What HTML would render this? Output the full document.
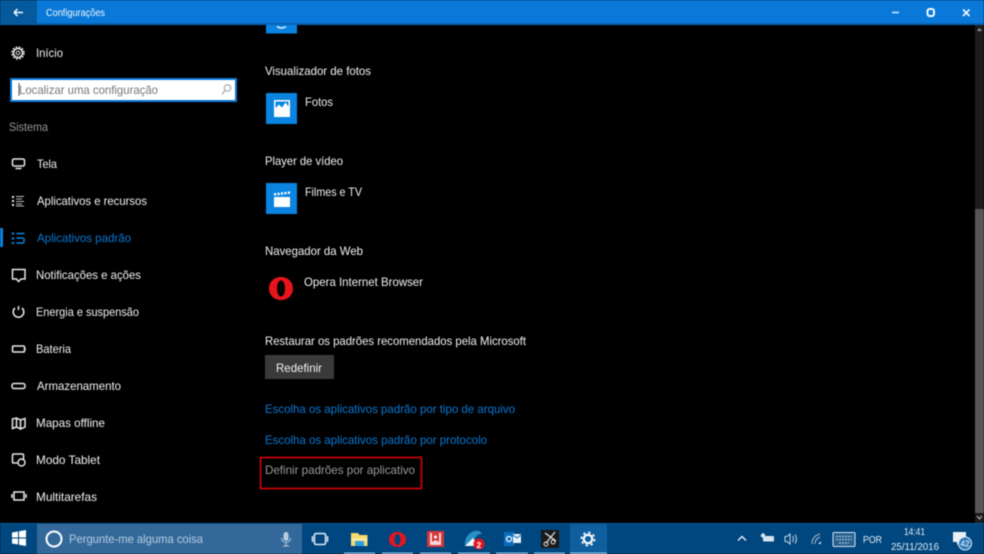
<!DOCTYPE html>
<html lang="pt"><head><meta charset="utf-8"><title>Configurações</title>
<style>
html,body{margin:0;padding:0;background:#000;width:984px;height:554px;overflow:hidden}
svg{display:block;filter:blur(.45px)}
text{font-family:"Liberation Sans",sans-serif;font-size:12px;fill:#f2f2f2}
.b{fill:#0a78d4}
.i{fill:none;stroke:#e8e8e8;stroke-width:1.5}
.u{fill:#8fc0e8}
</style></head><body>
<svg width="984" height="554" viewBox="0 0 984 554" xmlns="http://www.w3.org/2000/svg">
<rect width="984" height="554" fill="#000"/>
<!-- title bar -->
<rect width="984" height="23" fill="#0a78d8"/>
<rect y="23" width="984" height="2" fill="#0563b4"/>
<rect width="37" height="24" fill="#055a9e"/>
<path d="M14 12.500h9M14 12.500l3.500-3.500M14 12.500l3.500 3.500" fill="none" stroke="#f2f8fd" stroke-width="1.500"/>
<text x="46" y="16" textLength="59" lengthAdjust="spacingAndGlyphs" style="font-size:10px;fill:#f2f8fd">Configurações</text>
<path d="M892 12.500h7" stroke="#cfe4f6" stroke-width="1.600"/>
<rect x="927.500" y="9" width="6.500" height="7" rx="2" fill="none" stroke="#f2f8fd" stroke-width="2"/>
<path d="M963 9.500l6.500 6.500M969.500 9.500l-6.500 6.500" stroke="#f2f8fd" stroke-width="1.600"/>
<!-- sidebar -->
<circle cx="18" cy="53" r="4.500" class="i"/><circle cx="18" cy="53" r="1.800" fill="none" stroke="#e8e8e8" stroke-width="1"/><circle cx="18" cy="53" r="6" fill="none" stroke="#e8e8e8" stroke-width="1.400" stroke-dasharray="1.800 1.400"/>
<text x="36" y="57" textLength="27" lengthAdjust="spacingAndGlyphs">Início</text>
<rect x="11" y="79" width="225" height="22" fill="#fff" stroke="#0a78d8" stroke-width="2"/>
<path d="M19 83v13" stroke="#555" stroke-width="1"/>
<text x="19" y="94" textLength="139" lengthAdjust="spacingAndGlyphs" style="fill:#777">Localizar uma configuração</text>
<circle cx="227.500" cy="88" r="3.300" fill="none" stroke="#999" stroke-width="1"/><path d="M225 90.500l-3 3.500" stroke="#999" stroke-width="1"/>
<text x="9" y="131" textLength="39" lengthAdjust="spacingAndGlyphs" style="fill:#999">Sistema</text>

<rect x="12.500" y="159" width="12" height="7" rx="1.500" class="i"/><path d="M15.500 168.500h6" class="i"/>
<text x="37" y="168" textLength="20" lengthAdjust="spacingAndGlyphs">Tela</text>
<path d="M13 196v2M13 200v2M13 204v2" stroke="#f0f0f0" stroke-width="2"/><path d="M16 196.500h8M16 199h6M16 201.500h8M16 204h6M16 206h8" stroke="#bbb" stroke-width="1"/>
<text x="37" y="205" textLength="110" lengthAdjust="spacingAndGlyphs">Aplicativos e recursos</text>
<rect x="0" y="228" width="3" height="19" fill="#0a84e0"/>
<path d="M13 232.500v2M13 237.500v2M13 242v2" stroke="#0a84e0" stroke-width="2.400"/><path d="M16.500 233.500h8M16.500 238h7M16.500 243h7M24 238v5" stroke="#0a84e0" stroke-width="1.400" fill="none"/>
<text x="37" y="242" textLength="94" lengthAdjust="spacingAndGlyphs" class="b">Aplicativos padrão</text>
<path d="M12.500 269.500h12.500v9.500h-4l-2.500 2.500-2-2.500h-4z" class="i"/>
<text x="36" y="279" textLength="105" lengthAdjust="spacingAndGlyphs">Notificações e ações</text>
<path d="M15 308a5.300 5.300 0 1 0 7 0" class="i"/><path d="M18.500 306v4" class="i"/>
<text x="36" y="316" textLength="103" lengthAdjust="spacingAndGlyphs">Energia e suspensão</text>
<rect x="12.500" y="346" width="12" height="6" rx="1" class="i"/><path d="M25 348v2" class="i"/>
<text x="36" y="353" textLength="35" lengthAdjust="spacingAndGlyphs">Bateria</text>
<rect x="12" y="383.500" width="13" height="5" rx="2" class="i"/>
<text x="37" y="390" textLength="84" lengthAdjust="spacingAndGlyphs">Armazenamento</text>
<path d="M12.500 419v9.500l4-1.500 4 2 4.500-2v-8.500l-4.500 1.500-4-2zM16.500 417.500v9M20.500 419.500v9" class="i"/>
<text x="36" y="427" textLength="69" lengthAdjust="spacingAndGlyphs">Mapas offline</text>
<rect x="12.500" y="454" width="11" height="9" rx="1" class="i"/><circle cx="21.500" cy="462.500" r="3.500" fill="#000" stroke="#e8e8e8" stroke-width="1.400"/>
<text x="36" y="464" textLength="64" lengthAdjust="spacingAndGlyphs">Modo Tablet</text>
<rect x="14" y="492" width="10" height="8" class="i"/><path d="M12 494v4M26 494v4" class="i"/>
<text x="36" y="501" textLength="61" lengthAdjust="spacingAndGlyphs">Multitarefas</text>

<!-- content -->
<rect x="266" y="25" width="31" height="8.500" fill="#0a84e0"/>
<path d="M277 26.500q4.500 3 9 0" fill="none" stroke="#e4f2fc" stroke-width="1.400"/>
<text x="265" y="75" textLength="106" lengthAdjust="spacingAndGlyphs">Visualizador de fotos</text>
<rect x="266" y="93" width="31" height="31" fill="#0a84e0"/>
<rect x="274" y="100" width="16" height="17" fill="#fff"/>
<path d="M275.500 108l3.500-3.500 3 3 3.500-5 3 4v-5h-13z" fill="#0a84e0"/>
<text x="305" y="106" textLength="28" lengthAdjust="spacingAndGlyphs">Fotos</text>
<text x="265" y="165" textLength="78" lengthAdjust="spacingAndGlyphs">Player de vídeo</text>
<rect x="266" y="183" width="31" height="31" fill="#0a84e0"/>
<rect x="274" y="197" width="16" height="10" fill="#fff"/>
<path d="M274 194.500l16-2" stroke="#fff" stroke-width="2.400" stroke-dasharray="2.200 1.300"/>
<text x="305" y="196" textLength="57" lengthAdjust="spacingAndGlyphs">Filmes e TV</text>
<text x="265" y="255" textLength="98" lengthAdjust="spacingAndGlyphs">Navegador da Web</text>
<path fill-rule="evenodd" d="M281 277c7 0 12 5 12 11.500S288 300 281 300s-12-5-12-11.500S274 277 281 277zm0 3.500c-2.500 0-4 3.500-4 8s1.500 8 4 8 4-3.500 4-8-1.500-8-4-8z" fill="#e8141c"/>
<text x="304" y="286" textLength="119" lengthAdjust="spacingAndGlyphs">Opera Internet Browser</text>
<text x="265" y="345" textLength="261" lengthAdjust="spacingAndGlyphs">Restaurar os padrões recomendados pela Microsoft</text>
<rect x="265" y="355" width="69" height="24" fill="#3a3a3a"/>
<text x="276" y="372" textLength="46" lengthAdjust="spacingAndGlyphs">Redefinir</text>
<text x="265" y="413" textLength="250" lengthAdjust="spacingAndGlyphs" class="b">Escolha os aplicativos padrão por tipo de arquivo</text>
<text x="265" y="444" textLength="222" lengthAdjust="spacingAndGlyphs" class="b">Escolha os aplicativos padrão por protocolo</text>
<text x="265" y="474" textLength="150" lengthAdjust="spacingAndGlyphs" style="fill:#999">Definir padrões por aplicativo</text>
<rect x="260.500" y="457.500" width="161" height="31" fill="none" stroke="#d8000a" stroke-width="1.600"/>

<!-- scrollbar -->
<rect x="975" y="25" width="9" height="498" fill="#1c1c1c"/>
<rect x="975" y="209" width="9" height="304" fill="#565656"/>
<path d="M977 31l2.500-3 2.500 3z" fill="#999"/>
<path d="M977 516l2.500 3 2.500-3" fill="none" stroke="#bbb" stroke-width="1"/>

<!-- taskbar -->
<rect y="523" width="984" height="31" fill="#00467f"/>
<rect y="523" width="984" height="1" fill="#0b5c9b"/>
<rect x="37" y="524" width="265" height="30" fill="#33699a"/>
<path d="M12 532.500l6-1v6h-6zM19 531.300l7-1.300v7.500h-7zM12 538.500h6v6l-6-1zM19 538.500h7V546l-7-1.300z" fill="#fff"/>
<circle cx="54" cy="539" r="7.500" fill="none" stroke="#fff" stroke-width="2"/>
<text x="69" y="543" textLength="134" lengthAdjust="spacingAndGlyphs" style="fill:#b6cde0">Pergunte-me alguma coisa</text>
<rect x="283.500" y="532" width="5" height="9" rx="2.500" fill="#b6cde0"/><path d="M281.500 538a4.500 4.500 0 0 0 9 0M286 543v2.500M283 546h6" fill="none" stroke="#b6cde0" stroke-width="1"/>
<rect x="314.500" y="533.500" width="11" height="11" rx="1.500" fill="none" stroke="#e4edf5" stroke-width="1.500"/><path d="M312.500 536v6M327.500 536v6" stroke="#e4edf5" stroke-width="1.500"/>

<rect x="570" y="524" width="37" height="30" fill="#0f5f9f"/>
<!-- explorer -->
<path d="M351 533h7l1.500 2h8v11h-16.500z" fill="#f6d96b"/><rect x="351" y="538" width="16.500" height="3" fill="#f9e79a"/><rect x="355" y="541" width="9" height="5" fill="#2c9fe0"/>
<!-- opera -->
<path fill-rule="evenodd" d="M397.500 532c5 0 8.500 3.300 8.500 7.500s-3.500 7.500-8.500 7.500-8.500-3.300-8.500-7.500 3.500-7.500 8.500-7.500zm0 2c-1.800 0-3 2.500-3 5.500s1.200 5.500 3 5.500 3-2.500 3-5.500-1.200-5.500-3-5.500z" fill="#e8141c"/>
<!-- red bookmark app -->
<rect x="427" y="531" width="17" height="16" fill="#d6373c"/><rect x="430" y="533" width="11" height="12" fill="#f6d8d8"/><path d="M432 532h7v10l-3.500-2-3.500 2z" fill="#d6373c"/><circle cx="435.500" cy="537" r="1.500" fill="#fff"/>
<!-- mail/thunderbird-like -->
<path d="M465 546q-1-11 9-15 6-1 8 3-6 0-7 5l2 7z" fill="#2a8fc4"/><path d="M465 546l8-8 5 8z" fill="#f2f6fa"/>
<circle cx="479" cy="544" r="5.500" fill="#e0141e"/>
<text x="476.500" y="548" style="font-size:8.500px;font-weight:bold;fill:#fff">2</text>
<!-- outlook -->
<rect x="504" y="532" width="10" height="14" fill="#0a6ec0"/><rect x="513" y="534" width="8" height="9" fill="#e8f2fb"/><path d="M513 535l4 3 4-3" fill="none" stroke="#0a6ec0" stroke-width="1"/><circle cx="509" cy="539" r="2.500" fill="none" stroke="#fff" stroke-width="1.200"/>
<!-- scissors -->
<rect x="541" y="530" width="18" height="18" fill="#1a1a1a"/><path d="M546 543l9-11M556 541l-11-8" stroke="#e8e8e8" stroke-width="1.200"/><circle cx="546" cy="544" r="2" fill="none" stroke="#e8e8e8"/><circle cx="553" cy="542" r="2" fill="none" stroke="#e8e8e8"/>
<!-- gear -->
<circle cx="588" cy="539" r="4.200" fill="none" stroke="#fff" stroke-width="2.200"/><circle cx="588" cy="539" r="6.500" fill="none" stroke="#fff" stroke-width="1.800" stroke-dasharray="2.300 2.800"/>
<!-- running indicators -->
<rect x="344" y="552.500" width="31" height="1.500" class="u"/><rect x="382" y="552.500" width="31" height="1.500" class="u"/><rect x="420" y="552.500" width="31" height="1.500" class="u"/><rect x="458" y="552.500" width="32" height="1.500" class="u"/><rect x="496" y="552.500" width="32" height="1.500" class="u"/><rect x="534" y="552.500" width="31" height="1.500" class="u"/><rect x="570" y="552.500" width="37" height="1.500" class="u"/>
<!-- tray -->
<path d="M738 540.500l4-4 4 4" fill="none" stroke="#e4edf5" stroke-width="1.400"/>
<rect x="763" y="536" width="11" height="5.500" rx="1" fill="#d6e4f0"/><circle cx="763" cy="535.500" r="2.200" fill="#d6e4f0"/>
<path d="M785 536.500h2l3-2.500v10l-3-2.500h-2z" fill="none" stroke="#c8d8e6" stroke-width="1"/><path d="M792.500 536q2 3 0 6M795 534.500q3 4.500 0 9" fill="none" stroke="#c8d8e6" stroke-width="1"/>
<path d="M812 544q0-8 8-10M815 544q0-5 5-7" fill="none" stroke="#a9bfd2" stroke-width="1"/><path d="M818 544h3v-3z" fill="#c8d8e6"/>
<rect x="833" y="532.500" width="22" height="14" rx="1" fill="#27618f" stroke="#d6e4f0" stroke-width="1"/><path d="M836 536.500h16M836 539.500h16M839 543h10" stroke="#a9c3d8" stroke-width="1.200" stroke-dasharray="2 1"/>
<text x="863" y="543" textLength="19" lengthAdjust="spacingAndGlyphs" style="font-size:10px;fill:#e4edf5">POR</text>
<text x="904" y="535" textLength="21" lengthAdjust="spacingAndGlyphs" style="font-size:10px;fill:#e4edf5">14:41</text>
<text x="891" y="550" textLength="48" lengthAdjust="spacingAndGlyphs" style="font-size:10px;fill:#e4edf5">25/11/2016</text>
<path d="M953 532h13v10h-6l-3 3v-3h-4z" fill="#e8eff5"/>
<circle cx="965" cy="543.500" r="6.500" fill="#2b79b8" stroke="#e8eff5" stroke-width="1"/>
<text x="960.500" y="546.500" style="font-size:8px;fill:#fff">42</text>
</svg>
</body></html>
